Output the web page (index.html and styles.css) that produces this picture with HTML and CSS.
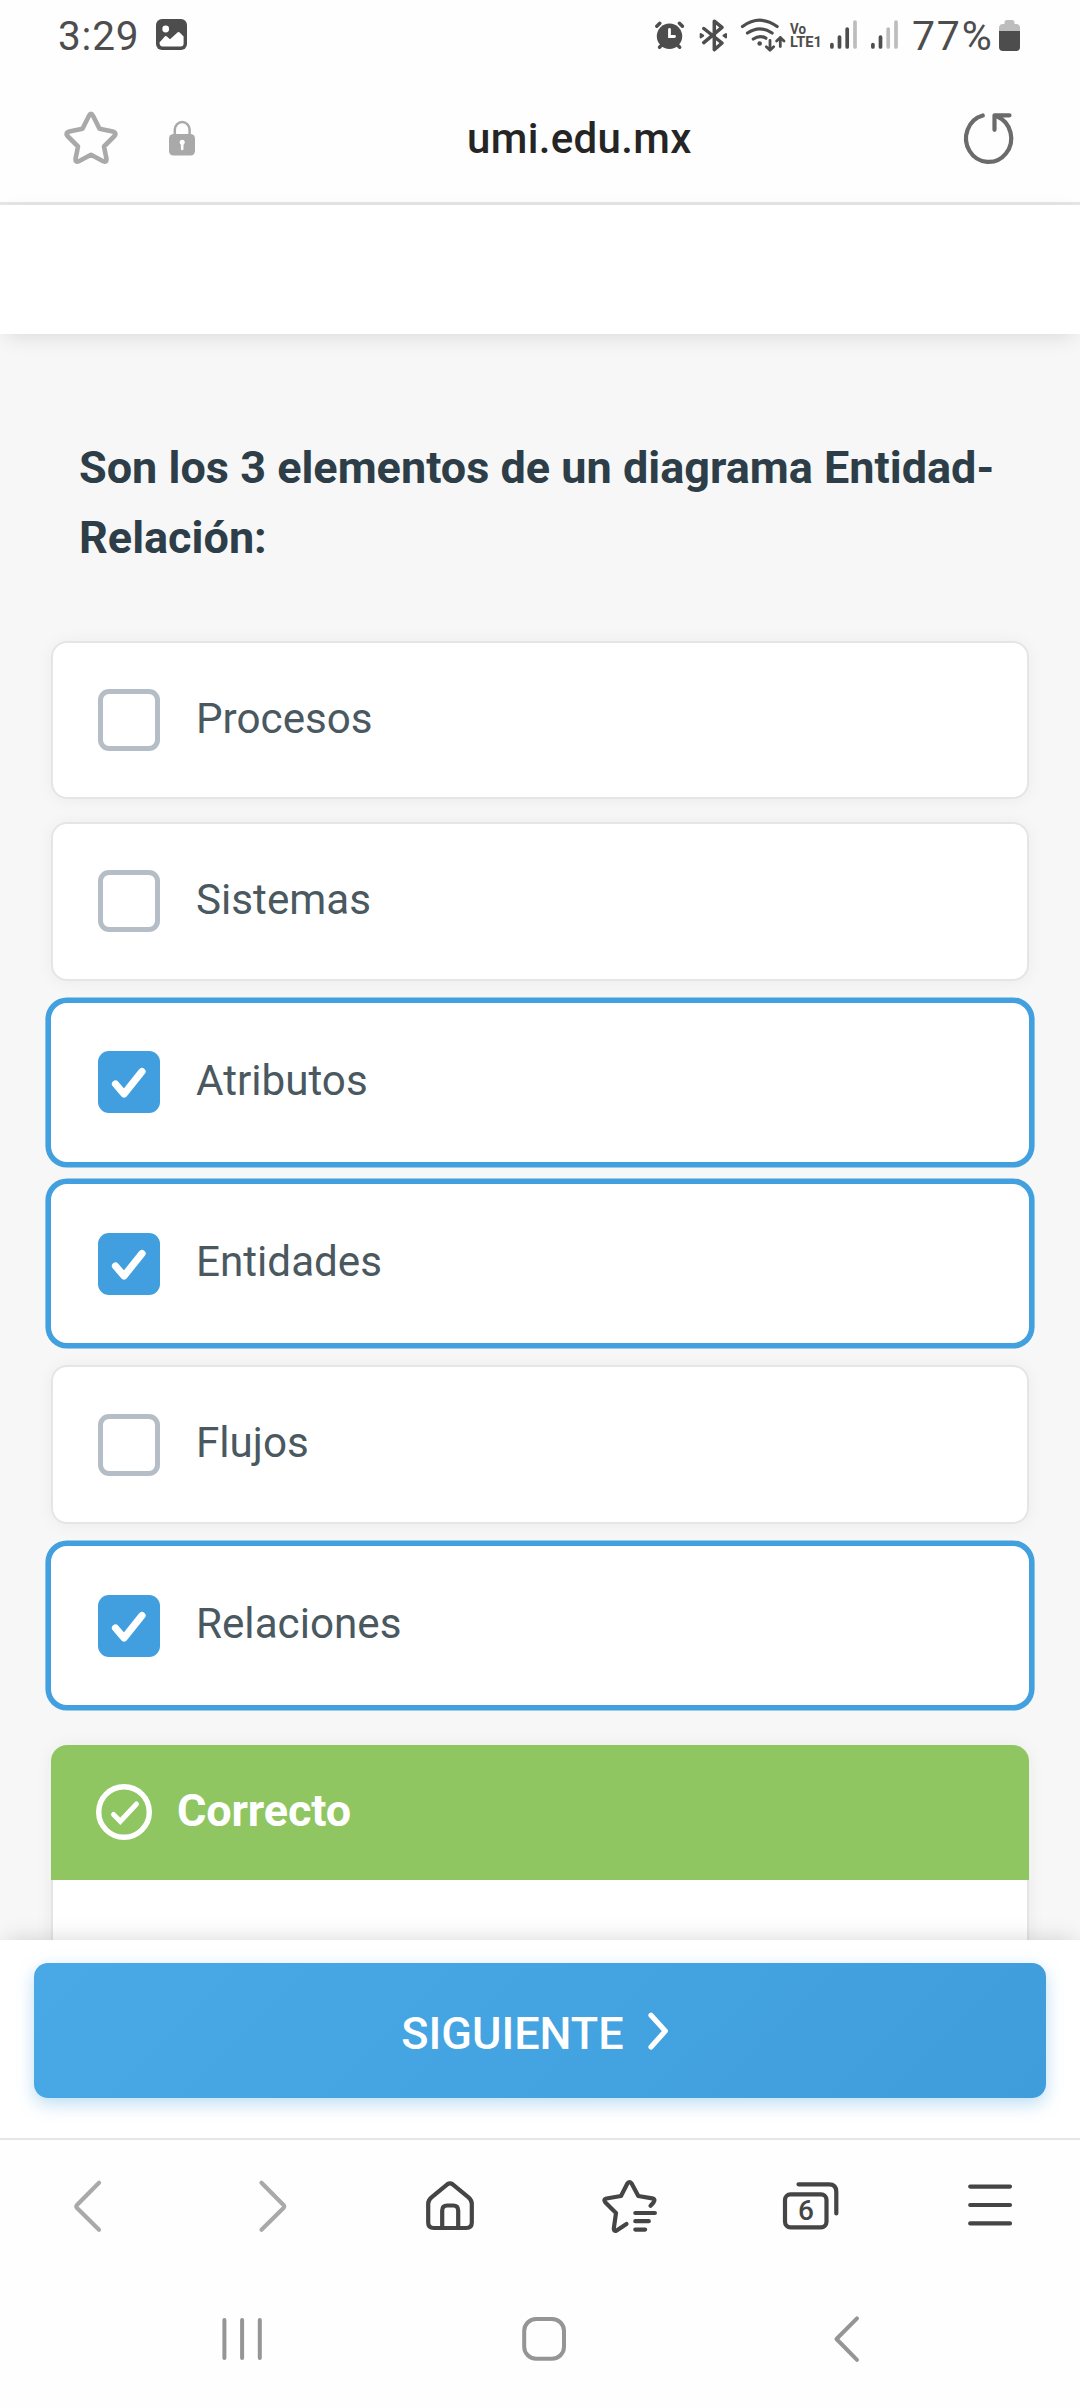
FILE: index.html
```html
<!DOCTYPE html>
<html lang="es">
<head>
<meta charset="utf-8">
<title>umi.edu.mx</title>
<link rel="stylesheet" href="styles.css">
</head>
<body>
<div class="phone">
  <div class="status">
    <span class="status-text time">3:29</span>
    <svg class="ic-image" width="32" height="32" viewBox="156 20 32 32"><rect x="156" y="20" width="31" height="31" rx="6" fill="#4d4d4d"/><circle cx="165.7" cy="30" r="3.4" fill="#fff"/><path d="M159.500 43.500l5.500-6.200q.8-.6 1.600 0l3.400 3 7.800-7q1-.6 1.800.2l4 4V44.500q0 3-3 3h-18q-3 0-3.100-4z" fill="#fff"/></svg>
    <div class="status-right">
      <svg width="30" height="32" viewBox="656 19 30 32" stroke="#4d4d4d" stroke-width="3.4" stroke-linecap="round" fill="none"><circle cx="670.500" cy="36.200" r="12.700" fill="#4d4d4d" stroke="none"/><path d="M657.800 26.200l3-3M683.400 26.200l-3-3" /><path d="M660.500 47.200l2-2M680.700 47.200l-2-2"/><path d="M670.500 29.500v7h5" stroke="#fff" stroke-width="2.800"/></svg>
      <svg width="29" height="34" viewBox="700 18 29 34" stroke="#4d4d4d" stroke-width="3.500" stroke-linecap="round" stroke-linejoin="round" fill="none"><path d="M704.800 28.500l18.200 14.500-7.700 6.700V21.200l7.700 6.200-18.200 15.200"/><path d="M701.700 34l2.500 1.700-2.500 1.700zM727 34l-2.500 1.700 2.500 1.700z" fill="#4d4d4d" stroke-width="2"/></svg>
      <svg width="48" height="36" viewBox="741 17 48 36" stroke="#4d4d4d" stroke-width="3.200" stroke-linecap="round" stroke-linejoin="round" fill="none"><path d="M743.500 26.500q17.300-12.600 34.600 0M748.500 33q12.300-8.400 24.600 0M754.300 39q6.500-4.400 12.600-.8"/><circle cx="760.700" cy="43.500" r="2.300" fill="#4d4d4d" stroke="none"/><path d="M771 40.500v9.500M767.300 46.800l3.700 3.400 3.700-3.400M781.300 46.500v-9M777.600 41l3.700-3.500 3.700 3.500" stroke-width="2.800"/></svg>
      <svg class="volte" width="36" height="34" viewBox="790 18 36 34"><text x="791" y="34" textLength="16" lengthAdjust="spacingAndGlyphs">Vo</text><text x="791" y="47" textLength="32" lengthAdjust="spacingAndGlyphs">LTE1</text></svg>
      <svg width="32" height="34" viewBox="830 18 32 34" stroke="#4d4d4d" stroke-width="3.700" stroke-linecap="round"><path d="M832.900 44.600v2.400M840.500 37v10M848.200 29v18"/><path d="M856 22v25" stroke="#bdbdbd"/></svg>
      <svg width="32" height="34" viewBox="871 18 32 34" stroke="#4d4d4d" stroke-width="3.700" stroke-linecap="round"><path d="M873.900 44.600v2.400M881.500 37v10"/><path d="M889.200 29v18M897 22v25" stroke="#bdbdbd"/></svg>
      <span class="status-text pct">77%</span>
      <svg width="22" height="34" viewBox="1000 18 22 34"><path d="M1000 32v-4q0-4 4-4h1.500v-1.500q0-2.500 2.500-2.500h5q2.500 0 2.500 2.500V24h1.500q4 0 4 4v4z" fill="#bdbdbd"/><path d="M1000 31h21v16q0 4-4 4h-13q-4 0-4-4z" fill="#4d4d4d"/></svg>
    </div>
  </div>

  <div class="urlbar">
    <svg width="60" height="60" viewBox="61 108 60 60" stroke="#a9a9a9" stroke-width="4.600" stroke-linejoin="round" fill="none"><path d="M89 115.800q2-4 4 0l6.500 13L112.700 131.500q4.500 1.300 1.800 4.500L104 146.500L106.500 159q.2 3.800-3.300 2.200L91 154.800L78.800 161.200q-3.500 1.600-3.300-2.200L78 146.500L67.500 136q-2.700-3.200 1.800-4.500L82.500 128.800z"/></svg>
    <svg class="ic-lock" width="28" height="36" viewBox="168 120 28 36"><path d="M174.800 136v-6.500a7.400 7.400 0 0 1 14.800 0v6.500" stroke="#a9a9a9" stroke-width="2.500" fill="none"/><rect x="169" y="134" width="26" height="21.500" rx="4.500" fill="#a9a9a9"/><circle cx="182.200" cy="142.300" r="2.500" fill="#fff"/><path d="M182.200 142v7" stroke="#fff" stroke-width="2.600" stroke-linecap="round"/></svg>
    <span class="url">umi.edu.mx</span>
    <svg class="ic-reload" width="56" height="56" viewBox="961 110 56 56" stroke="#6b6b6b" stroke-width="4.200" stroke-linecap="round" stroke-linejoin="round" fill="none"><path d="M983.800 115.500a22.600 23.600 0 1 0 14.500 1"/><path d="M1010.500 115.300h-15v14.500"/></svg>
  </div>

  <div class="page-head"></div>

  <main class="content">
    <h1 class="question">Son los 3 elementos de un diagrama Entidad-Relación:</h1>
    <div class="options">
      <label class="option"><span class="box"></span><span class="label">Procesos</span></label>
      <label class="option"><span class="box"></span><span class="label">Sistemas</span></label>
      <label class="option selected"><span class="box"><svg width="62" height="62" viewBox="0 0 62 62"><path d="M17.500 33l8.500 10L44 20.500"/></svg></span><span class="label">Atributos</span></label>
      <label class="option selected"><span class="box"><svg width="62" height="62" viewBox="0 0 62 62"><path d="M17.500 33l8.500 10L44 20.500"/></svg></span><span class="label">Entidades</span></label>
      <label class="option"><span class="box"></span><span class="label">Flujos</span></label>
      <label class="option selected"><span class="box"><svg width="62" height="62" viewBox="0 0 62 62"><path d="M17.500 33l8.500 10L44 20.500"/></svg></span><span class="label">Relaciones</span></label>
    </div>
    <section class="feedback">
      <div class="feedback-head">
        <svg width="56" height="56" viewBox="0 0 56 56" fill="none" stroke="#fff" stroke-linecap="round"><circle cx="28" cy="28" r="25.300" stroke-width="5.400"/><path d="M17.500 30.500l6.800 6.800L40.500 20" stroke-width="5"/></svg>
        <span class="feedback-title">Correcto</span>
      </div>
      <div class="feedback-body"></div>
    </section>
  </main>

  <div class="action">
    <button class="next"><span class="next-text">SIGUIENTE</span><svg width="21" height="38" viewBox="0 0 21 38" fill="none" stroke="#fff" stroke-width="5.200" stroke-linecap="round" stroke-linejoin="round"><path d="M3 3.200L17.300 19 3 35"/></svg></button>
  </div>

  <nav class="browser-nav">
    <svg width="60" height="60" viewBox="60 2176 60 60" class="dim"><path d="M99 2183.200l-22 22.300q-1.300 1.500 0 3L99 2230.300" transform="translate(0 -.5)"/></svg>
    <svg width="60" height="60" viewBox="240 2176 60 60" class="dim"><path d="M261.500 2183.200l22 22.300q1.300 1.500 0 3L261.500 2230.300" transform="translate(0 -.5)"/></svg>
    <svg width="60" height="60" viewBox="420 2176 60 60"><path d="M447.300 2184.300q2.700-2 5.400 0L468.500 2197.300q3.300 2.700 3.300 6.500V2222.500q0 5.500-5.500 5.500H433.700q-5.500 0-5.500-5.500V2203.800q0-3.800 3.300-6.500z"/><path d="M442.200 2228v-17.500q0-5 5-5h6q5 0 5 5V2228"/></svg>
    <svg width="60" height="60" viewBox="600 2176 60 60"><path d="M650.500 2205.800l3-3.300q2.500-3.300-1.200-4.100L638.300 2196l-6.800-12.700q-2-2.400-4 0L621 2196l-14.500 2.500q-3.600.9-1.300 3.700L616 2213l-2.200 15.500q0 3.200 2.800 2L626.500 2224"/><path d="M635.300 2213h19.600M635.300 2221.200h13.500M635.300 2229.600h9.800"/></svg>
    <svg width="60" height="60" viewBox="780 2176 60 60"><rect x="785" y="2194.300" width="41.500" height="33" rx="5.500"/><path d="M798.500 2184.300h30.500q7.300 0 7.300 7.500V2213.500"/><text x="806" y="2220.300">6</text></svg>
    <svg width="60" height="60" viewBox="960 2176 60 60"><path d="M970.200 2186.600h39.800M970.200 2205h39.800M970.200 2223.400h39.800"/></svg>
  </nav>
  <div class="system-nav">
    <svg width="60" height="60" viewBox="212 2309 60 60"><path d="M224.400 2320v38M242.100 2320v38M259.800 2320v38"/></svg>
    <svg width="60" height="60" viewBox="514 2309 60 60"><rect x="524.200" y="2319" width="39.800" height="39.800" rx="12"/></svg>
    <svg width="60" height="60" viewBox="816 2309 60 60"><path d="M857 2318.300l-20.500 20.700L857 2359.800"/></svg>
  </div>
</div>
</body>
</html>
```
FILE: styles.css
```css
* { box-sizing: border-box; }
body { margin: 0; background: #fefefe; font-family: Roboto, "Liberation Sans", sans-serif; }
svg { display: block; flex: none; }
.phone { width: 1080px; height: 2408px; display: flex; flex-direction: column; overflow: hidden; background: #fefefe; }

.status { height: 70px; padding: 0 59px 0 58px; display: flex; align-items: center; }
.status-text { font-size: 40.5px; line-height: 46px; color: #4d4d4d; font-weight: 400; padding-top: 2px; white-space: nowrap; }
.time { width: 98px; letter-spacing: 0.8px; }
.pct { width: 87px; margin-left: 10px; font-size: 41px; letter-spacing: 1.8px; }
.status-right { margin-left: auto; display: flex; align-items: center; }
.status-right svg + svg { margin-left: 9px; }
.status-right svg:nth-child(2) { margin-left: 14px; }
.status-right svg:nth-child(3) { margin-left: 12px; }
.status-right svg:nth-child(4) { margin-left: 1px; }
.status-right svg:nth-child(5) { margin-left: 4px; }
.volte text { font-size: 15.5px; font-weight: 700; fill: #4d4d4d; }

.urlbar { height: 135px; padding: 0 64px 0 61px; display: flex; align-items: center; border-bottom: 3px solid #e6e6e6; }
.urlbar > svg { margin-top: 4px; }
.ic-lock { margin-left: 47px; }
.url { margin-left: 271px; width: 230px; white-space: nowrap; font-size: 42px; line-height: 50px; font-weight: 500; letter-spacing: 0.35px; color: #252525; padding-top: 6px; }
.ic-reload { margin-left: auto; }

.page-head { height: 129px; background: #fff; position: relative; z-index: 1; box-shadow: 0 6px 22px -6px rgba(0, 0, 0, .15); }

.content { height: 1606px; padding: 99px 51px 0; background: #f7f7f7; overflow: hidden; }
.question { margin: 0 0 67.400px; padding: 0 28px; font-size: 45px; line-height: 70.300px; font-weight: 700; color: #2d3e48; }
.options { display: flex; flex-direction: column; gap: 22.600px; }
.option { height: 158.500px; padding: 0 45px; display: flex; align-items: center; gap: 36px; background: #fff; border: 2px solid #e5e5e5; border-radius: 16px; box-shadow: 0 1px 17px rgba(0, 0, 0, .05); }
.option.selected { border-color: #fff; box-shadow: 0 0 0 5.600px #42a0de; }
.box { width: 62px; height: 62px; flex: none; border: 5.600px solid #b5bec6; border-radius: 11px; }
.selected .box { border: 0; background: #419fe0; }
.box path { fill: none; stroke: #fff; stroke-width: 7.200px; stroke-linecap: round; stroke-linejoin: round; }
.label { font-size: 42.200px; line-height: 50px; color: #4a5860; padding-bottom: 3px; }

.feedback { margin-top: 39.600px; background: #fff; border-radius: 16px; box-shadow: 0 1px 17px rgba(0, 0, 0, .06); }
.feedback-head { height: 135px; padding: 0 45px; display: flex; align-items: center; gap: 25px; background: #8fc661; border-radius: 16px 16px 0 0; color: #fff; font-size: 45px; font-weight: 700; }
.feedback-title { padding-bottom: 4px; letter-spacing: -0.15px; }
.feedback-body { height: 140px; border: solid #e5e5e5; border-width: 0 2px; }

.action { height: 198px; padding: 23px 34px 0; background: #fff; position: relative; z-index: 1; box-shadow: 0 -6px 22px -6px rgba(0, 0, 0, .16); }
.next { width: 1012px; height: 135px; padding: 0 10px 0 0; border: 0; border-radius: 14px; display: flex; align-items: center; justify-content: center; gap: 24px; font: 500 45px/1 Roboto, "Liberation Sans", sans-serif; color: #fff; background: linear-gradient(135deg, #49a9e6, #3f9ddc); box-shadow: 0 6px 17px rgba(65, 159, 224, .35); }
.next-text { padding-top: 5px; }

.browser-nav { height: 135px; padding-bottom: 1px; border-top: 2px solid #e6e6e6; display: grid; grid-template-columns: repeat(6, 180px); justify-items: center; align-items: center; background: #fefefe; position: relative; z-index: 1; }
.browser-nav svg { fill: none; stroke: #454545; stroke-width: 4.200px; stroke-linecap: round; stroke-linejoin: round; }
.browser-nav .dim { stroke: #a9a9a9; }
.browser-nav text { fill: #454545; stroke: none; font-size: 28px; font-weight: 500; text-anchor: middle; }
.system-nav { height: 135px; padding: 0 83px 3px 91px; display: grid; grid-template-columns: repeat(3, 302px); justify-items: center; align-items: center; }
.system-nav svg { fill: none; stroke: #959595; stroke-width: 4px; stroke-linecap: round; stroke-linejoin: round; }
```
